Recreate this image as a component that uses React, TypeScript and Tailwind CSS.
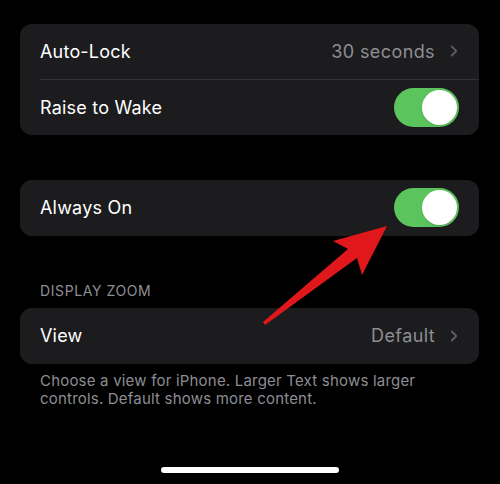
import { ChevronRight } from "lucide-react";

function Toggle() {
  return (
    <div className="w-[65px] h-[39px] rounded-full bg-[#5cc45d] flex items-center justify-end pr-[2px]">
      <div className="w-[35px] h-[35px] rounded-full bg-white shadow" />
    </div>
  );
}

function Row({ label, value, toggle, divider }: { label: string; value?: string; toggle?: boolean; divider?: boolean }) {
  return (
    <div className="pl-5">
      <div className={`h-[55.5px] flex items-center justify-between pr-5 ${divider ? "border-b border-[#333335]" : ""}`}>
        <span className="text-[18px] text-white tracking-[0.2px]">{label}</span>
        {toggle ? (
          <Toggle />
        ) : (
          <span className="flex items-center gap-[10px] text-[18px] text-[#8e8e93] tracking-[0.4px]">
            {value}
            <ChevronRight className="w-[18px] h-[18px] text-[#5b5b60] -mr-[4px]" strokeWidth={2.5} />
          </span>
        )}
      </div>
    </div>
  );
}

export default function App() {
  return (
    <div className="relative w-[500px] h-[484px] bg-black overflow-hidden" style={{ fontFamily: "Inter, 'Noto Sans', sans-serif" }}>
      <div className="pt-6 px-5 flex flex-col">
        <div className="w-[459px] rounded-xl bg-[#1c1c1e] overflow-hidden">
          <Row label="Auto-Lock" value="30 seconds" divider />
          <Row label="Raise to Wake" toggle />
        </div>

        <div className="w-[459px] mt-[45px] rounded-xl bg-[#1c1c1e] overflow-hidden">
          <Row label="Always On" toggle />
        </div>

        <div className="mt-[47.5px] pl-5 text-[14px] text-[#8e8e93] tracking-[0.6px] leading-4">DISPLAY ZOOM</div>

        <div className="w-[459px] mt-[9px] rounded-xl bg-[#1c1c1e] overflow-hidden">
          <Row label="View" value="Default" />
        </div>

        <p className="mt-[8.5px] pl-5 w-[430px] text-[15px] leading-[18px] text-[#8d8d93] tracking-[0.2px]">
          Choose a view for iPhone. Larger Text shows larger controls. Default shows more content.
        </p>
      </div>

      <div className="absolute left-[161px] top-[467px] w-[178px] h-[6px] rounded-full bg-white" />

      <svg className="absolute left-0 top-0" width="500" height="484" viewBox="0 0 500 484">
        <polygon
          points="387,226 333,241 348,249 263,322 265,325 357,258 362,275"
          fill="#e0181b"
        />
      </svg>
    </div>
  );
}
